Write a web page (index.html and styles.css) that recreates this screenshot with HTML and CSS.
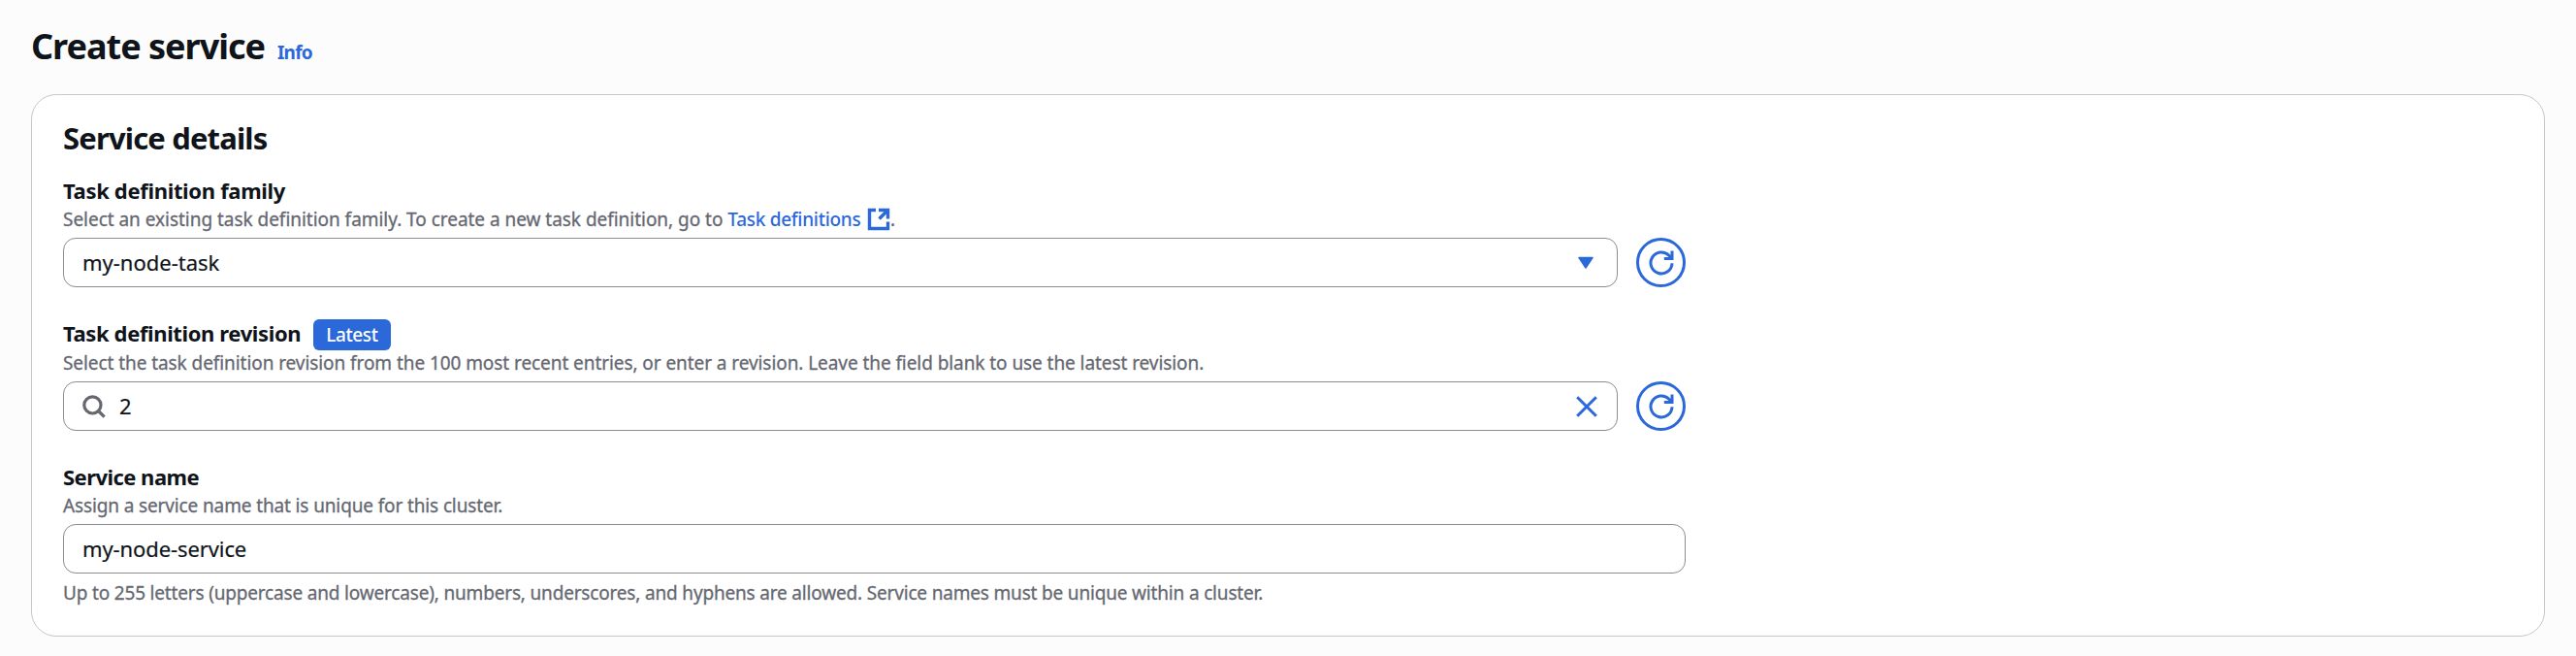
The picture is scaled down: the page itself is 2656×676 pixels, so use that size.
FILE: index.html
```html
<!DOCTYPE html>
<html lang="en">
<head>
<meta charset="utf-8">
<title>Create service</title>
<link rel="stylesheet" href="styles.css">
</head>
<body>
<main class="page">
  <header class="page-header">
    <h1 class="page-title">Create service</h1>
    <a class="info-link">Info</a>
  </header>
  <section class="card">
    <h2 class="card-title">Service details</h2>

    <div class="field field-family">
      <div class="label-row"><span class="label label-family">Task definition family</span></div>
      <div class="hint"><span class="hint-family">Select an existing task definition family. To create a new task definition, go to </span><a class="link">Task definitions</a><svg class="icon-external" viewBox="0 0 24 24"><path d="M9 2.5H2.5V21.5H21.5V14.5M12 2.5H21.5V11.5M21 3L12.5 11.5"/></svg>.</div>
      <div class="control-row">
        <div class="input"><span class="value value-task">my-node-task</span><svg class="icon-caret" viewBox="0 0 16 14"><path d="M1 1.5H15L8 12Z"/></svg></div>
        <button class="round-button" aria-label="Refresh"><svg class="icon-refresh" viewBox="0 0 26 26"><path d="M24 13.2A11 11 0 1 1 20.8 5.2L24 8.5M24 0.6V8.5H15.8"/></svg></button>
      </div>
    </div>

    <div class="field field-revision">
      <div class="label-row"><span class="label label-revision">Task definition revision</span><span class="badge">Latest</span></div>
      <div class="hint hint-revision">Select the task definition revision from the 100 most recent entries, or enter a revision. Leave the field blank to use the latest revision.</div>
      <div class="control-row">
        <div class="input"><svg class="icon-search" viewBox="0 0 24 24"><circle cx="10.4" cy="10.4" r="8.6"/><path d="M16.5 16.5L22.6 22.6"/></svg><span class="value">2</span><svg class="icon-clear" viewBox="0 0 22 22"><path d="M1.2 1.2L20.8 20.8M20.8 1.2L1.2 20.8"/></svg></div>
        <button class="round-button" aria-label="Refresh"><svg class="icon-refresh" viewBox="0 0 26 26"><path d="M24 13.2A11 11 0 1 1 20.8 5.2L24 8.5M24 0.6V8.5H15.8"/></svg></button>
      </div>
    </div>

    <div class="field field-name">
      <div class="label-row"><span class="label label-name">Service name</span></div>
      <div class="hint hint-name">Assign a service name that is unique for this cluster.</div>
      <div class="control-row">
        <div class="input"><span class="value value-service">my-node-service</span></div>
      </div>
      <div class="hint hint-constraint">Up to 255 letters (uppercase and lowercase), numbers, underscores, and hyphens are allowed. Service names must be unique within a cluster.</div>
    </div>
  </section>
</main>
</body>
</html>
```
FILE: styles.css
```css
* { box-sizing: border-box; }
body {
  margin: 0;
  background: #fcfcfd;
  color: #0f141a;
  font-family: "Noto Sans", "Open Sans", sans-serif;
}
.page { height: 676px; padding: 24px 32px 20px; }
.page-header {
  display: flex;
  align-items: baseline;
  height: 73px;
  gap: 13px;
}
.page-title {
  margin: 0;
  width: 241px;
  font-size: 36px;
  line-height: 48px;
  font-weight: 700;
  letter-spacing: -1px;
  white-space: nowrap;
}
.info-link {
  color: #2b68d9;
  font-size: 19px;
  font-weight: 700;
  letter-spacing: -0.8px;
}
.card {
  height: 559px;
  padding: 24px 32px 30px;
  background: #fff;
  border: 1px solid #c6c6cd;
  border-radius: 26px;
}
.card-title {
  margin: 0;
  font-size: 31px;
  line-height: 40px;
  font-weight: 700;
  letter-spacing: -0.85px;
}
.field { width: 1673px; }
.field-family { margin-top: 20px; }
.field-revision { margin-top: 33px; }
.field-name { margin-top: 33px; }
.label-row { display: flex; align-items: flex-start; height: 30px; }
.field-revision .label-row { height: 31px; }
.label {
  font-size: 22px;
  line-height: 28px;
  font-weight: 700;
  white-space: nowrap;
}
.label-family { letter-spacing: -0.33px; }
.label-revision { letter-spacing: -0.38px; }
.label-name { letter-spacing: -0.54px; }
.badge {
  height: 32px;
  margin-left: 13px;
  padding: 0 13px;
  border-radius: 6px;
  background: #2b68d9;
  color: #fff;
  font-size: 19px;
  line-height: 32px;
  font-weight: 500;
  letter-spacing: -0.4px;
}
.hint {
  display: flex;
  align-items: center;
  height: 28px;
  color: #656871;
  font-size: 19px;
  line-height: 28px;
  white-space: pre;
  -webkit-text-stroke: 0.3px currentColor;
}
.hint-family { letter-spacing: -0.03px; }
.hint-revision { letter-spacing: -0.07px; }
.hint-name { letter-spacing: -0.13px; }
.hint-constraint { margin-top: 6px; letter-spacing: -0.175px; }
.link { color: #2b68d9; font-weight: 500; letter-spacing: -0.28px; -webkit-text-stroke: 0; }
.icon-external {
  width: 24px;
  height: 24px;
  margin-left: 6.5px;
  fill: none;
  stroke: #2b68d9;
  stroke-width: 3.4;
}
.control-row { display: flex; gap: 19px; margin-top: 5px; }
.input {
  flex: 1;
  display: flex;
  align-items: center;
  height: 51px;
  padding: 0 20px 0 19px;
  border: 1px solid #8c8c94;
  border-radius: 13px;
  background: #fff;
}
.value {
  padding-bottom: 2px;
  font-size: 22px;
  line-height: 46px;
  -webkit-text-stroke: 0.2px currentColor;
}
.value-service { letter-spacing: -0.1px; }
.icon-caret {
  width: 16px;
  height: 14px;
  margin-left: auto;
  margin-right: 4px;
  fill: #2b68d9;
  stroke: #2b68d9;
  stroke-width: 1.5;
  stroke-linejoin: round;
}
.icon-search {
  width: 24px;
  height: 24px;
  margin-right: 14px;
  fill: none;
  stroke: #656871;
  stroke-width: 3.2;
}
.icon-clear {
  width: 22px;
  height: 22px;
  margin-left: auto;
  fill: none;
  stroke: #2b68d9;
  stroke-width: 3;
}
.round-button {
  display: flex;
  align-items: center;
  justify-content: center;
  width: 51px;
  height: 51px;
  padding: 0;
  border: 3px solid #2b68d9;
  border-radius: 50%;
  background: #fff;
}
.icon-refresh {
  width: 26px;
  height: 26px;
  fill: none;
  stroke: #2b68d9;
  stroke-width: 3;
}
```
